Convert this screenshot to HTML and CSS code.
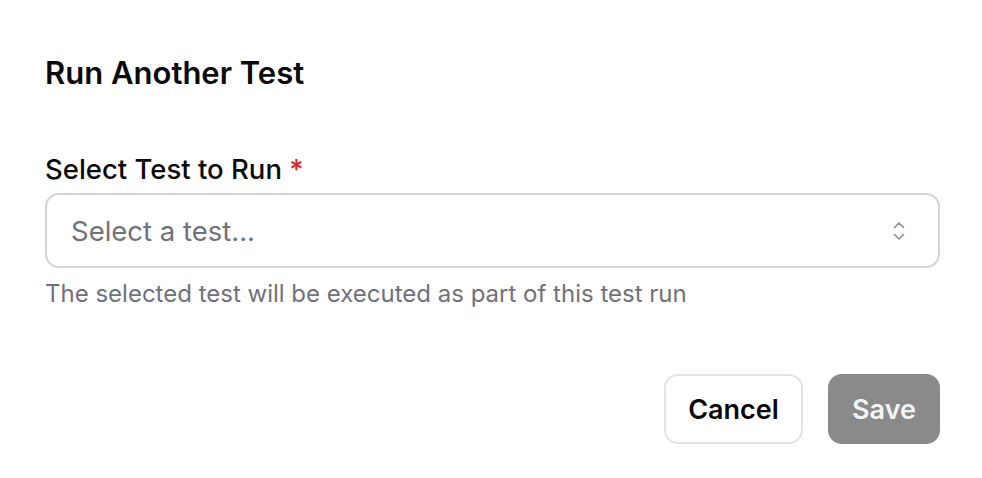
FILE: index.html
```html
<!DOCTYPE html>
<html>
<head>
<meta charset="utf-8">
<link rel="stylesheet" href="styles.css">
</head>
<body>
<div class="dialog">
  <h2 class="title">Run Another Test</h2>
  <div class="field">
    <label class="label">Select Test to Run <span class="req">*</span></label>
    <div class="select">
      <span class="placeholder">Select a test...</span>
      <svg class="chev" width="16" height="24" viewBox="0 0 16 24" fill="none" stroke="#8e8e93" stroke-width="1.6" stroke-linecap="round" stroke-linejoin="round"><path d="M3.5 8.5 L8 4 L12.5 8.5"/><path d="M3.5 15.5 L8 20 L12.5 15.5"/></svg>
    </div>
    <p class="help">The selected test will be executed as part of this test run</p>
  </div>
  <div class="actions">
    <button class="btn btn-cancel">Cancel</button>
    <button class="btn btn-save">Save</button>
  </div>
</div>
</body>
</html>
```
FILE: styles.css
```css
* { box-sizing: border-box; }
html, body { margin: 0; background: #fff; }
body { font-family: Inter, "Noto Sans", sans-serif; color: #0a0a0a; }
.dialog { padding: 56px 42px 0 45px; }
.title { margin: 0; font-size: 31px; font-weight: 600; line-height: 34px; }
.field { margin-top: 64px; }
.label { display: block; font-size: 27.5px; font-weight: 500; line-height: 30px; }
.req { color: #dc2626; }
.select { margin-top: 9px; height: 75px; border: 2px solid #d4d4d8; border-radius: 14px; display: flex; align-items: center; justify-content: space-between; padding: 0 31px 0 24px; }
.placeholder { font-size: 27.5px; color: #71717a; }
.help { margin: 12px 0 0; font-size: 24px; color: #71717a; line-height: 28px; }
.actions { margin-top: 66px; display: flex; justify-content: flex-end; gap: 25px; }
.btn { font-family: inherit; font-size: 27px; font-weight: 600; height: 70px; border-radius: 14px; cursor: pointer; padding: 0; }
.btn-cancel { width: 139px; background: #fff; border: 2px solid #e4e4e7; color: #0a0a0a; }
.btn-save { width: 112px; background: #8a8a8a; border: none; color: #f4f4f5; }
```
